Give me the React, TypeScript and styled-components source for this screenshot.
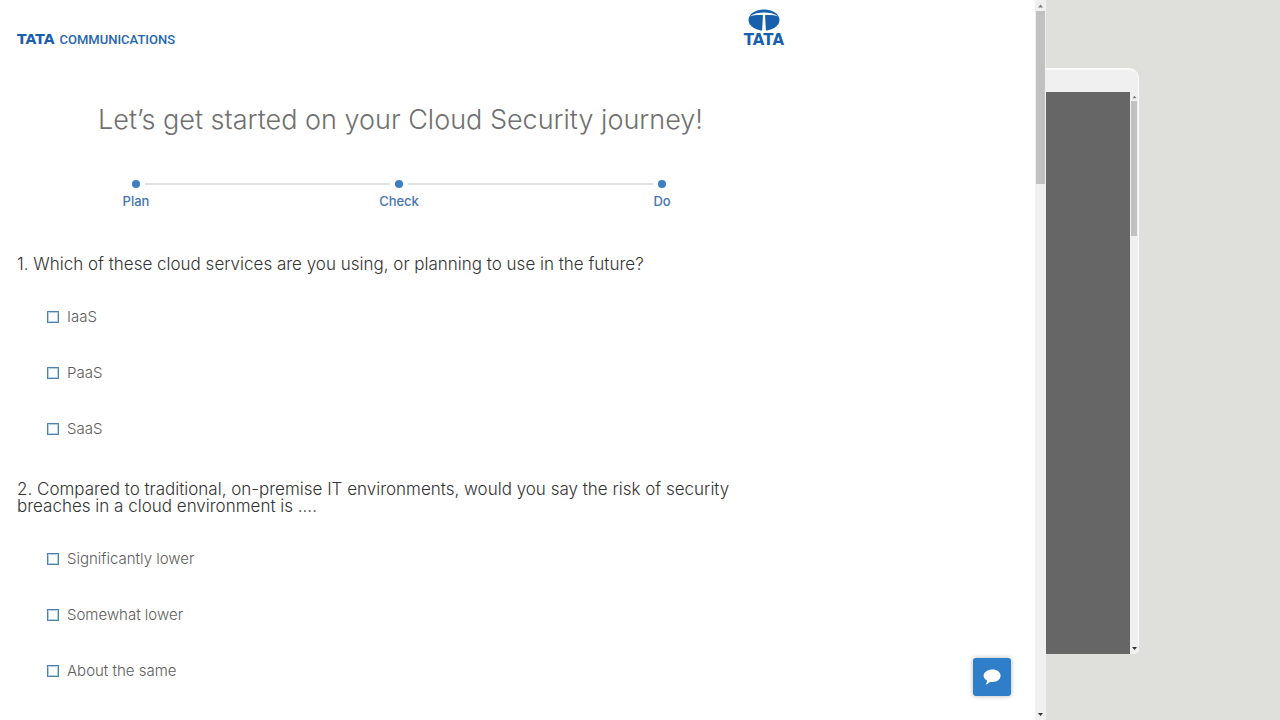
import React from "react";
import styled, { createGlobalStyle } from "styled-components";

const GlobalStyle = createGlobalStyle`
  *, *::before, *::after { box-sizing: border-box; }
  body {
    margin: 0;
    background: #dfe0db;
    font-family: Inter, "Liberation Sans", sans-serif;
    color: #4a4a4a;
  }
`;

const Desktop = styled.div`
  display: grid;
  grid-template-columns: minmax(0, 1fr) 11px 234px;
  height: 100vh;
  overflow: hidden;
`;

const Pane = styled.main`
  position: relative;
  background: #fff;
  overflow: hidden;
`;

const Survey = styled.form`
  max-width: 800px;
  padding: 8px 16px 0 17px;
`;

const Header = styled.header`
  display: flex;
  justify-content: space-between;
  align-items: flex-end;
  height: 40px;
`;

const Wordmark = styled.a`
  display: flex;
  align-items: baseline;
  gap: 5px;
  color: #1f66b0;
  text-decoration: none;
  font: 500 13px/16px Roboto, sans-serif;
`;

const Tata = styled.span<{ $size: number }>`
  font: 700 ${(p) => p.$size}px/16px "DejaVu Sans", sans-serif;
  color: #1a5fae;
`;

const GroupLogo = styled.a`
  display: flex;
  flex-direction: column;
  align-items: center;
  text-decoration: none;
`;

const Title = styled.h1`
  margin: 52px 0 0;
  font-size: 27px;
  line-height: 40px;
  font-weight: 300;
  text-align: center;
  color: #6f6f70;
`;

const Steps = styled.ol`
  display: flex;
  max-width: 537px;
  margin: 40px auto 0;
  padding: 0 3px 0 0;
  list-style: none;
`;

const Step = styled.li<{ $last?: boolean }>`
  display: grid;
  grid-template-columns: ${(p) => (p.$last ? "8px" : "8px minmax(0, 1fr)")};
  column-gap: 5px;
  row-gap: 4px;
  align-items: center;
  flex: ${(p) => (p.$last ? "0 0 8px" : "1")};
`;

const Dot = styled.span`
  width: 8px;
  height: 8px;
  border-radius: 50%;
  background: #3a7ec4;
`;

const Line = styled.span`
  height: 2px;
  margin-right: 5px;
  background: #e2e2e2;
`;

const StepLabel = styled.span`
  grid-column: 1;
  justify-self: center;
  font-size: 13px;
  line-height: 18px;
  font-weight: 500;
  color: #4675b2;
`;

const Question = styled.fieldset`
  margin: 0;
  padding: 0;
  border: 0;
  min-width: 0;
`;

const Questions = styled.div`
  display: grid;
  gap: 24px;
  margin-top: 46px;
`;

const Prompt = styled.legend`
  padding: 0;
  margin-bottom: 16px;
  font-size: 17px;
  line-height: 17px;
  font-weight: 300;
  color: #333;
`;

const Option = styled.label`
  display: flex;
  align-items: center;
  gap: 8px;
  height: 56px;
  padding-left: 30px;
  font-size: 15px;
  line-height: 20px;
  font-weight: 300;
  color: #5c5c5c;
`;

const Check = styled.input`
  appearance: none;
  width: 12px;
  height: 12px;
  margin: 0;
  border: 1px solid #4a83a8;
  outline: 1px solid #b4d0e2;
  outline-offset: -2px;
  background: #fff;
  &:checked { background: #3a7ec4; }
`;

const ChatButton = styled.button`
  position: absolute;
  right: 24px;
  bottom: 24px;
  display: grid;
  place-items: center;
  width: 38px;
  height: 38px;
  padding: 0;
  border: 0;
  border-radius: 3px;
  background: #2f7ec9;
  box-shadow: 0 0 5px rgba(0, 0, 0, 0.3);
`;

const Scrollbar = styled.div`
  display: flex;
  flex-direction: column;
  align-items: center;
  justify-content: space-between;
  background: #f0f0f0;
`;

const Thumb = styled.div<{ $share: string }>`
  align-self: stretch;
  flex: 0 0 ${(p) => p.$share};
  margin: 0 1px auto;
  background: #c1c1c1;
`;

const Arrow = styled.svg<{ $height?: number }>`
  flex: none;
  width: 7px;
  height: ${(p) => p.$height ?? 11}px;
`;

const Behind = styled.aside`
  padding: 68px 141px 66px 0;
`;

const BackWindow = styled.div`
  display: grid;
  grid-template-rows: 22px minmax(0, 1fr);
  height: 100%;
  border: solid #fafafa;
  border-width: 2px 1px 0 0;
  border-radius: 0 10px 5px 0;
  background: #f0f0f0;
  overflow: hidden;
`;

const BackBody = styled.div`
  grid-row: 2;
  display: grid;
  grid-template-columns: minmax(0, 1fr) 8px;
`;

const Shade = styled.div`
  background: #666;
`;

const UpArrow = ({ height }: { height?: number }) => (
  <Arrow $height={height} viewBox="0 0 7 11" aria-hidden="true">
    <path d="M1 7.5 3.5 4.5 6 7.5Z" fill="#7a7a7a" />
  </Arrow>
);

const DownArrow = () => (
  <Arrow viewBox="0 0 7 11" aria-hidden="true">
    <path d="M1 4H6L3.5 7Z" fill="#333" />
  </Arrow>
);

const questions = [
  {
    text: "1. Which of these cloud services are you using, or planning to use in the future?",
    options: ["IaaS", "PaaS", "SaaS"],
  },
  {
    text: "2. Compared to traditional, on-premise IT environments, would you say the risk of security breaches in a cloud environment is ....",
    options: ["Significantly lower", "Somewhat lower", "About the same"],
  },
];

export default function App() {
  return (
    <>
      <GlobalStyle />
      <Desktop>
        <Pane>
          <Survey>
            <Header>
              <Wordmark href="#communications">
                <Tata $size={14}>TATA</Tata>
                <span>COMMUNICATIONS</span>
              </Wordmark>
              <GroupLogo href="#tata">
                <svg width="32" height="24" viewBox="0 0 32 24" aria-hidden="true">
                  <ellipse cx="16" cy="12" rx="15.5" ry="10.5" fill="#1a5fae" />
                  <path
                    d="M1.5 8.5C6 5.5 11 4.6 16 4.6S26 5.5 30.5 8.5C26.5 7.2 21 6.8 17 7.2L18 24H14L15 7.2C11 6.8 5.5 7.2 1.5 8.5Z"
                    fill="#fff"
                  />
                </svg>
                <Tata $size={15}>TATA</Tata>
              </GroupLogo>
            </Header>
            <Title>Let’s get started on your Cloud Security journey!</Title>
            <Steps>
              <Step>
                <Dot />
                <Line />
                <StepLabel>Plan</StepLabel>
              </Step>
              <Step>
                <Dot />
                <Line />
                <StepLabel>Check</StepLabel>
              </Step>
              <Step $last>
                <Dot />
                <StepLabel>Do</StepLabel>
              </Step>
            </Steps>
            <Questions>
              {questions.map((q) => (
                <Question key={q.text}>
                  <Prompt>{q.text}</Prompt>
                  {q.options.map((o) => (
                    <Option key={o}>
                      <Check type="checkbox" />
                      {o}
                    </Option>
                  ))}
                </Question>
              ))}
            </Questions>
          </Survey>
          <ChatButton type="button" aria-label="Open chat">
            <svg width="18" height="16" viewBox="0 0 18 16" aria-hidden="true">
              <path
                d="M9.5 0.5C14 0.5 17.6 3.2 17.6 6.8S14 13 9.5 13C8.6 13 7.8 12.9 7 12.7C5.8 14.3 4.3 15.2 2.6 15.4C3.5 14.4 4 13.2 4 11.6C2 10.5 0.6 8.8 0.6 6.8C0.6 3.2 5 0.5 9.5 0.5Z"
                fill="#fff"
              />
            </svg>
          </ChatButton>
        </Pane>
        <Scrollbar>
          <UpArrow />
          <Thumb $share="24%" />
          <DownArrow />
        </Scrollbar>
        <Behind>
          <BackWindow>
            <BackBody>
              <Shade />
              <Scrollbar>
                <UpArrow height={9} />
                <Thumb $share="24%" />
                <DownArrow />
              </Scrollbar>
            </BackBody>
          </BackWindow>
        </Behind>
      </Desktop>
    </>
  );
}
